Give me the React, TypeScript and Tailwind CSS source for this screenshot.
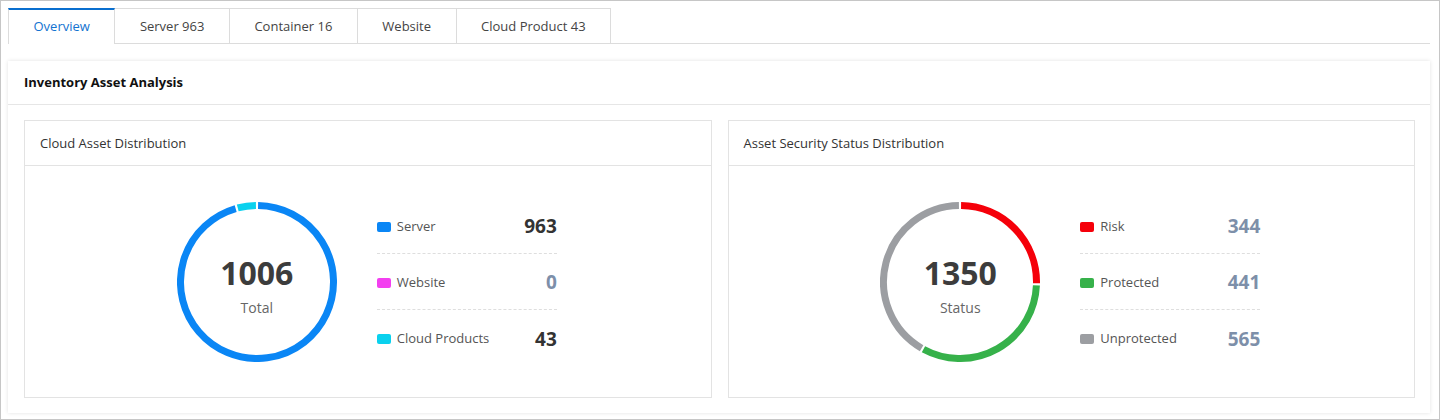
import React from 'react'

type Segment = { label: string; value: number; color: string }

const font = { fontFamily: '"Open Sans", "Noto Sans", sans-serif' }

const tabs = ['Overview', 'Server 963', 'Container 16', 'Website', 'Cloud Product 43']

function polar(cx: number, cy: number, r: number, deg: number) {
  const a = ((deg - 90) * Math.PI) / 180
  return [cx + r * Math.cos(a), cy + r * Math.sin(a)]
}

function arcPath(cx: number, cy: number, r: number, start: number, end: number) {
  const [x1, y1] = polar(cx, cy, r, start)
  const [x2, y2] = polar(cx, cy, r, end)
  const large = end - start > 180 ? 1 : 0
  return `M ${x1} ${y1} A ${r} ${r} 0 ${large} 1 ${x2} ${y2}`
}

function Donut({ segments, total, caption }: { segments: Segment[]; total: number; caption: string }) {
  const sum = segments.reduce((s, x) => s + x.value, 0)
  let angle = 0
  const gap = 0.8
  return (
    <div className="relative w-[160px] h-[160px] shrink-0">
      <svg width="160" height="160" viewBox="0 0 160 160">
        {segments
          .filter((s) => s.value > 0)
          .map((s) => {
            const sweep = (s.value / sum) * 360
            const d = arcPath(80, 80, 76.5, angle + gap, angle + sweep - gap)
            angle += sweep
            return <path key={s.label} d={d} fill="none" stroke={s.color} strokeWidth="7" />
          })}
      </svg>
      <div className="absolute inset-0 flex flex-col items-center justify-center pt-[9px]">
        <div className="text-[32px] leading-[36px] font-bold text-[#3c3c3c]">{total}</div>
        <div className="text-[14px] leading-[20px] text-[#666] mt-[7px]">{caption}</div>
      </div>
    </div>
  )
}

function Legend({ segments, muted }: { segments: Segment[]; muted?: boolean }) {
  return (
    <div className="w-[180px] flex flex-col">
      {segments.map((s, i) => (
        <div
          key={s.label}
          className={`h-[56px] pt-[3px] flex items-center justify-between ${
            i < segments.length - 1 ? 'border-b border-dashed border-[#dedede]' : ''
          }`}
        >
          <div className="flex items-center gap-[6px]">
            <span className="w-[14px] h-[10px] rounded-[2px]" style={{ background: s.color }} />
            <span className="text-[13px] text-[#555]">{s.label}</span>
          </div>
          <span
            className={`text-[19px] font-bold ${muted || s.value === 0 ? 'text-[#7d8fa9]' : 'text-[#333]'}`}
          >
            {s.value}
          </span>
        </div>
      ))}
    </div>
  )
}

function ChartCard({
  title,
  segments,
  total,
  caption,
  muted,
}: {
  title: string
  segments: Segment[]
  total: number
  caption: string
  muted?: boolean
}) {
  return (
    <div className="flex-1 border border-[#e3e3e3] flex flex-col">
      <div className="h-[45px] px-[15px] pt-[2px] flex items-center border-b border-[#e3e3e3] text-[13px] text-[#333]">
        {title}
      </div>
      <div className="flex-1 flex items-center justify-center gap-[40px] pr-[2px]">
        <Donut segments={segments} total={total} caption={caption} />
        <Legend segments={segments} muted={muted} />
      </div>
    </div>
  )
}

export default function App() {
  const cloud: Segment[] = [
    { label: 'Server', value: 963, color: '#0a86f5' },
    { label: 'Website', value: 0, color: '#f33ff0' },
    { label: 'Cloud Products', value: 43, color: '#0ad1ee' },
  ]
  const status: Segment[] = [
    { label: 'Risk', value: 344, color: '#f5000a' },
    { label: 'Protected', value: 441, color: '#36b14a' },
    { label: 'Unprotected', value: 565, color: '#9c9ea2' },
  ]

  return (
    <div style={font} className="w-[1440px] h-[420px] border border-[#c6c6c6] bg-white overflow-hidden">
      <div className="pt-[7px] pl-[7px] pr-[9px]">
        <div className="flex border-b border-[#dcdcdc] h-[36px]">
          {tabs.map((t, i) => (
            <div
              key={t}
              className={`h-[36px] px-[24.5px] flex items-center text-[13px] border-r border-[#dcdcdc] ${
                i === 0
                  ? 'border-l border-t-2 border-t-[#0a6fcf] text-[#1273d0] bg-white -mb-px h-[36px] pb-[1px]'
                  : 'border-t text-[#444]'
              }`}
            >
              {t}
            </div>
          ))}
        </div>
      </div>

      <div className="mt-[17px] ml-[7px] mr-[9px] h-[352px] bg-white shadow-[0_0_4px_rgba(0,0,0,0.12)] flex flex-col">
        <div className="h-[44px] px-[16px] pt-[1px] flex items-center border-b border-[#e6e6e6] text-[13px] font-bold text-[#111]">
          Inventory Asset Analysis
        </div>
        <div className="flex-1 flex gap-[16px] p-[15px] pl-[16px]">
          <ChartCard title="Cloud Asset Distribution" segments={cloud} total={1006} caption="Total" />
          <ChartCard
            title="Asset Security Status Distribution"
            segments={status}
            total={1350}
            caption="Status"
            muted
          />
        </div>
      </div>
    </div>
  )
}
